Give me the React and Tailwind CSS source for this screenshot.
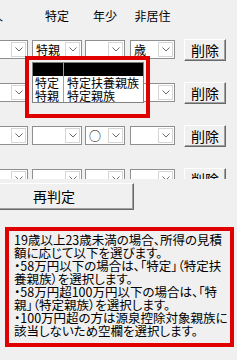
import React from "react";

const font = "[font-family:'Noto_Sans_CJK_JP','Noto_Sans',sans-serif]";

const Chevron = () => (
  <svg width="8" height="5" viewBox="0 0 8 5" fill="none">
    <path d="M0.5 0.5 L4 4 L7.5 0.5" stroke="#6a6a6a" strokeWidth="1" />
  </svg>
);

const Combo = ({ className = "", value = "" }) => (
  <div className={`flex h-[19px] shrink-0 border border-[#8f8f8f] bg-white ${className}`}>
    <div className="flex-1 overflow-hidden whitespace-nowrap pl-[3px] text-[12px] leading-[17px] text-black">
      {value}
    </div>
    <div className="m-px flex w-[15px] items-center justify-center border border-[#d6d6d6] bg-white">
      <Chevron />
    </div>
  </div>
);

const rows = [
  { toku: "特親", nen: "", hi: "歳" },
  { toku: "", nen: "", hi: "" },
  { toku: "", nen: "○", hi: "" },
  { toku: "", nen: "", hi: "" },
];

const noteLines = [
  "19歳以上23歳未満の場合、所得の見積",
  "額に応じて以下を選びます。",
  "・58万円以下の場合は、「特定」（特定扶",
  "養親族）を選択します。",
  "・58万円超100万円以下の場合は、「特",
  "親」（特定親族）を選択します。",
  "・100万円超の方は源泉控除対象親族に",
  "該当しないため空欄を選択します。",
];

const App = () => {
  return (
    <div className={`relative h-[360px] w-[237px] overflow-hidden bg-[#f0f0f0] text-black ${font}`}>
      {/* Column headers */}
      <div className="flex h-[28px] items-start pt-[9px] text-[12px] leading-[14px]">
        <span className="ml-[-9px] w-[12px] shrink-0">人</span>
        <span className="ml-[29px] w-[50px] shrink-0 text-center">特定</span>
        <span className="ml-[3px] w-[40px] shrink-0 text-center">年少</span>
        <span className="ml-[5px] w-[45px] shrink-0 text-center">非居住</span>
      </div>

      {/* Rows */}
      <div className="h-[151px] overflow-hidden">
        {rows.map((r, i) => (
          <div key={i} className="flex h-[43px] items-center">
            <Combo className="ml-[-17px] w-[45px]" />
            <Combo className="ml-[4px] w-[50px]" value={r.toku} />
            <Combo className="ml-[3px] w-[40px]" value={r.nen} />
            <Combo className="ml-[5px] w-[45px]" value={r.hi} />
            <button className="ml-[9px] h-[22px] w-[42px] shrink-0 border border-t-white border-l-white border-r-[#696969] border-b-[#696969] bg-[#f0f0f0] text-[14px] leading-[20px] shadow-[inset_-1px_-1px_0_#a0a0a0]">
              削除
            </button>
          </div>
        ))}
      </div>

      {/* Re-judge button */}
      <button className="mt-[4px] ml-[-26px] block h-[27px] w-[160px] border border-t-white border-l-white border-r-[#696969] border-b-[#696969] bg-[#f0f0f0] text-[14px] leading-[25px] shadow-[inset_-1px_-1px_0_#a0a0a0]">
        再判定
      </button>

      {/* Note */}
      <div className="mt-[17px] ml-[5px] h-[120px] w-[229px] border-4 border-[#e00000] bg-[#f0f0f0] pt-[2px] pl-[5px] text-[12.5px] leading-[13px] [font-feature-settings:'palt']">
        {noteLines.map((l, i) => (
          <div key={i} className="whitespace-nowrap">
            {l}
          </div>
        ))}
      </div>

      {/* Open dropdown list */}
      <div className="absolute left-[32px] top-[62px] w-[112px] border border-[#828282] bg-white text-[12px] leading-[13px]">
        <div className="flex h-[13px] bg-black">
          <div className="w-[31px] border-r border-[#a0a0a0]" />
          <div className="flex-1" />
        </div>
        <div className="flex h-[13px]">
          <div className="w-[31px] border-r border-[#a0a0a0] pl-[2px]">特定</div>
          <div className="flex-1 whitespace-nowrap pl-[3px]">特定扶養親族</div>
        </div>
        <div className="flex h-[13px]">
          <div className="w-[31px] border-r border-[#a0a0a0] pl-[2px]">特親</div>
          <div className="flex-1 whitespace-nowrap pl-[3px]">特定親族</div>
        </div>
      </div>

      {/* Red annotation frame */}
      <div className="absolute left-[25px] top-[56px] h-[62px] w-[125px] border-4 border-[#e00000]" />
    </div>
  );
};

export default App;
